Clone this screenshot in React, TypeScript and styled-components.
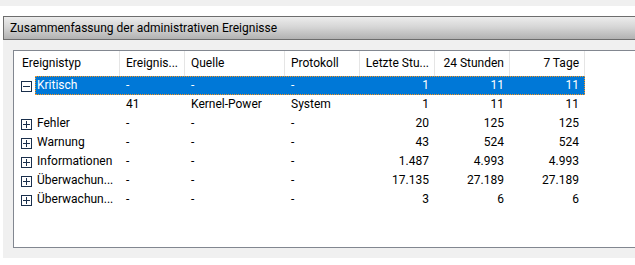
import React from 'react';
import styled, { createGlobalStyle } from 'styled-components';

const GlobalStyle = createGlobalStyle`
  html, body {
    margin: 0;
    padding: 0;
    background: #ffffff;
  }
  body {
    font-family: Roboto, 'Segoe UI', 'Liberation Sans', sans-serif;
    font-size: 12px;
    color: #000000;
    overflow: hidden;
  }
`;

const Page = styled.div`
  width: 635px;
  height: 265px;
  overflow: hidden;
  display: flex;
  flex-direction: column;
`;

const TopStrip = styled.div`
  height: 6px;
  background: #f0f0f0;
  margin-bottom: 10px;
`;

const Section = styled.div`
  margin-left: 3px;
  width: 700px;
  display: flex;
  flex-direction: column;
`;

const SectionHeader = styled.div`
  height: 22px;
  display: flex;
  align-items: center;
  padding-left: 6px;
  border: 1px solid #6d6d6d;
  border-right: none;
  background: linear-gradient(to bottom, #ececec 0%, #d6d6d6 45%, #b2b2b2 100%);
  white-space: nowrap;
`;

const SectionBody = styled.div`
  background: #f0f0f0;
  padding: 10px 0 10px 10px;
`;

const ListView = styled.div`
  height: 196px;
  border: 1px solid #828790;
  border-right: none;
  background: #ffffff;
`;

const HeaderRow = styled.div`
  display: grid;
  grid-template-columns: 106px 65px 100px 75px 75px 75px 75px;
  height: 25px;
`;

const HeaderCell = styled.div<{ $align?: 'left' | 'right'; $first?: boolean }>`
  box-sizing: border-box;
  border-right: 1px solid #e5e5e5;
  display: flex;
  align-items: center;
  justify-content: ${({ $align }) => ($align === 'right' ? 'flex-end' : 'flex-start')};
  padding: ${({ $first }) => ($first ? '0 5px 1px 8px' : '0 5px 1px 6px')};
  white-space: nowrap;
  overflow: hidden;
`;

const Row = styled.div`
  display: flex;
  height: 19px;
`;

const Expander = styled.div`
  width: 21px;
  display: flex;
  align-items: center;
  padding: 1px 0 0 7px;
  box-sizing: border-box;
`;

const RowBody = styled.div<{ $selected?: boolean }>`
  display: grid;
  grid-template-columns: 85px 65px 100px 75px 75px 75px 75px;
  background: ${({ $selected }) => ($selected ? '#0078d7' : 'transparent')};
  color: ${({ $selected }) => ($selected ? '#ffffff' : '#000000')};
  outline: ${({ $selected }) => ($selected ? '1px dotted #f7941d' : 'none')};
  outline-offset: -1px;
`;

const Cell = styled.div<{ $align?: 'left' | 'right'; $first?: boolean }>`
  box-sizing: border-box;
  display: flex;
  align-items: center;
  justify-content: ${({ $align }) => ($align === 'right' ? 'flex-end' : 'flex-start')};
  padding: ${({ $first }) => ($first ? '0 5px 1px 2px' : '0 6px 1px 6px')};
  white-space: nowrap;
  overflow: hidden;
`;

const ToggleBox = ({ open }: { open: boolean }) => (
  <svg width="11" height="11" viewBox="0 0 11 11">
    <rect x="0.5" y="0.5" width="10" height="10" fill="#ffffff" stroke="#1a2f4c" />
    <line x1="2" y1="5.5" x2="9" y2="5.5" stroke="#1a2f4c" />
    {!open && <line x1="5.5" y1="2" x2="5.5" y2="9" stroke="#1a2f4c" />}
  </svg>
);

type Entry = {
  type: string;
  id: string;
  source: string;
  log: string;
  hour: string;
  day: string;
  week: string;
  toggle?: 'open' | 'closed';
  selected?: boolean;
};

const columns = [
  { label: 'Ereignistyp', align: 'left' as const },
  { label: 'Ereignis...', align: 'left' as const },
  { label: 'Quelle', align: 'left' as const },
  { label: 'Protokoll', align: 'left' as const },
  { label: 'Letzte Stu...', align: 'right' as const },
  { label: '24 Stunden', align: 'right' as const },
  { label: '7 Tage', align: 'right' as const },
];

const entries: Entry[] = [
  { type: 'Kritisch', id: '-', source: '-', log: '-', hour: '1', day: '11', week: '11', toggle: 'open', selected: true },
  { type: '', id: '41', source: 'Kernel-Power', log: 'System', hour: '1', day: '11', week: '11' },
  { type: 'Fehler', id: '-', source: '-', log: '-', hour: '20', day: '125', week: '125', toggle: 'closed' },
  { type: 'Warnung', id: '-', source: '-', log: '-', hour: '43', day: '524', week: '524', toggle: 'closed' },
  { type: 'Informationen', id: '-', source: '-', log: '-', hour: '1.487', day: '4.993', week: '4.993', toggle: 'closed' },
  { type: 'Überwachun...', id: '-', source: '-', log: '-', hour: '17.135', day: '27.189', week: '27.189', toggle: 'closed' },
  { type: 'Überwachun...', id: '-', source: '-', log: '-', hour: '3', day: '6', week: '6', toggle: 'closed' },
];

export default function App() {
  return (
    <>
      <GlobalStyle />
      <Page>
        <TopStrip />
        <Section>
          <SectionHeader>Zusammenfassung der administrativen Ereignisse</SectionHeader>
          <SectionBody>
            <ListView>
              <HeaderRow>
                {columns.map((c, i) => (
                  <HeaderCell key={c.label} $align={c.align} $first={i === 0}>
                    {c.label}
                  </HeaderCell>
                ))}
              </HeaderRow>
              {entries.map((e, i) => (
                <Row key={i}>
                  <Expander>{e.toggle && <ToggleBox open={e.toggle === 'open'} />}</Expander>
                  <RowBody $selected={e.selected}>
                    <Cell $first>{e.type}</Cell>
                    <Cell>{e.id}</Cell>
                    <Cell>{e.source}</Cell>
                    <Cell>{e.log}</Cell>
                    <Cell $align="right">{e.hour}</Cell>
                    <Cell $align="right">{e.day}</Cell>
                    <Cell $align="right">{e.week}</Cell>
                  </RowBody>
                </Row>
              ))}
            </ListView>
          </SectionBody>
        </Section>
      </Page>
    </>
  );
}
